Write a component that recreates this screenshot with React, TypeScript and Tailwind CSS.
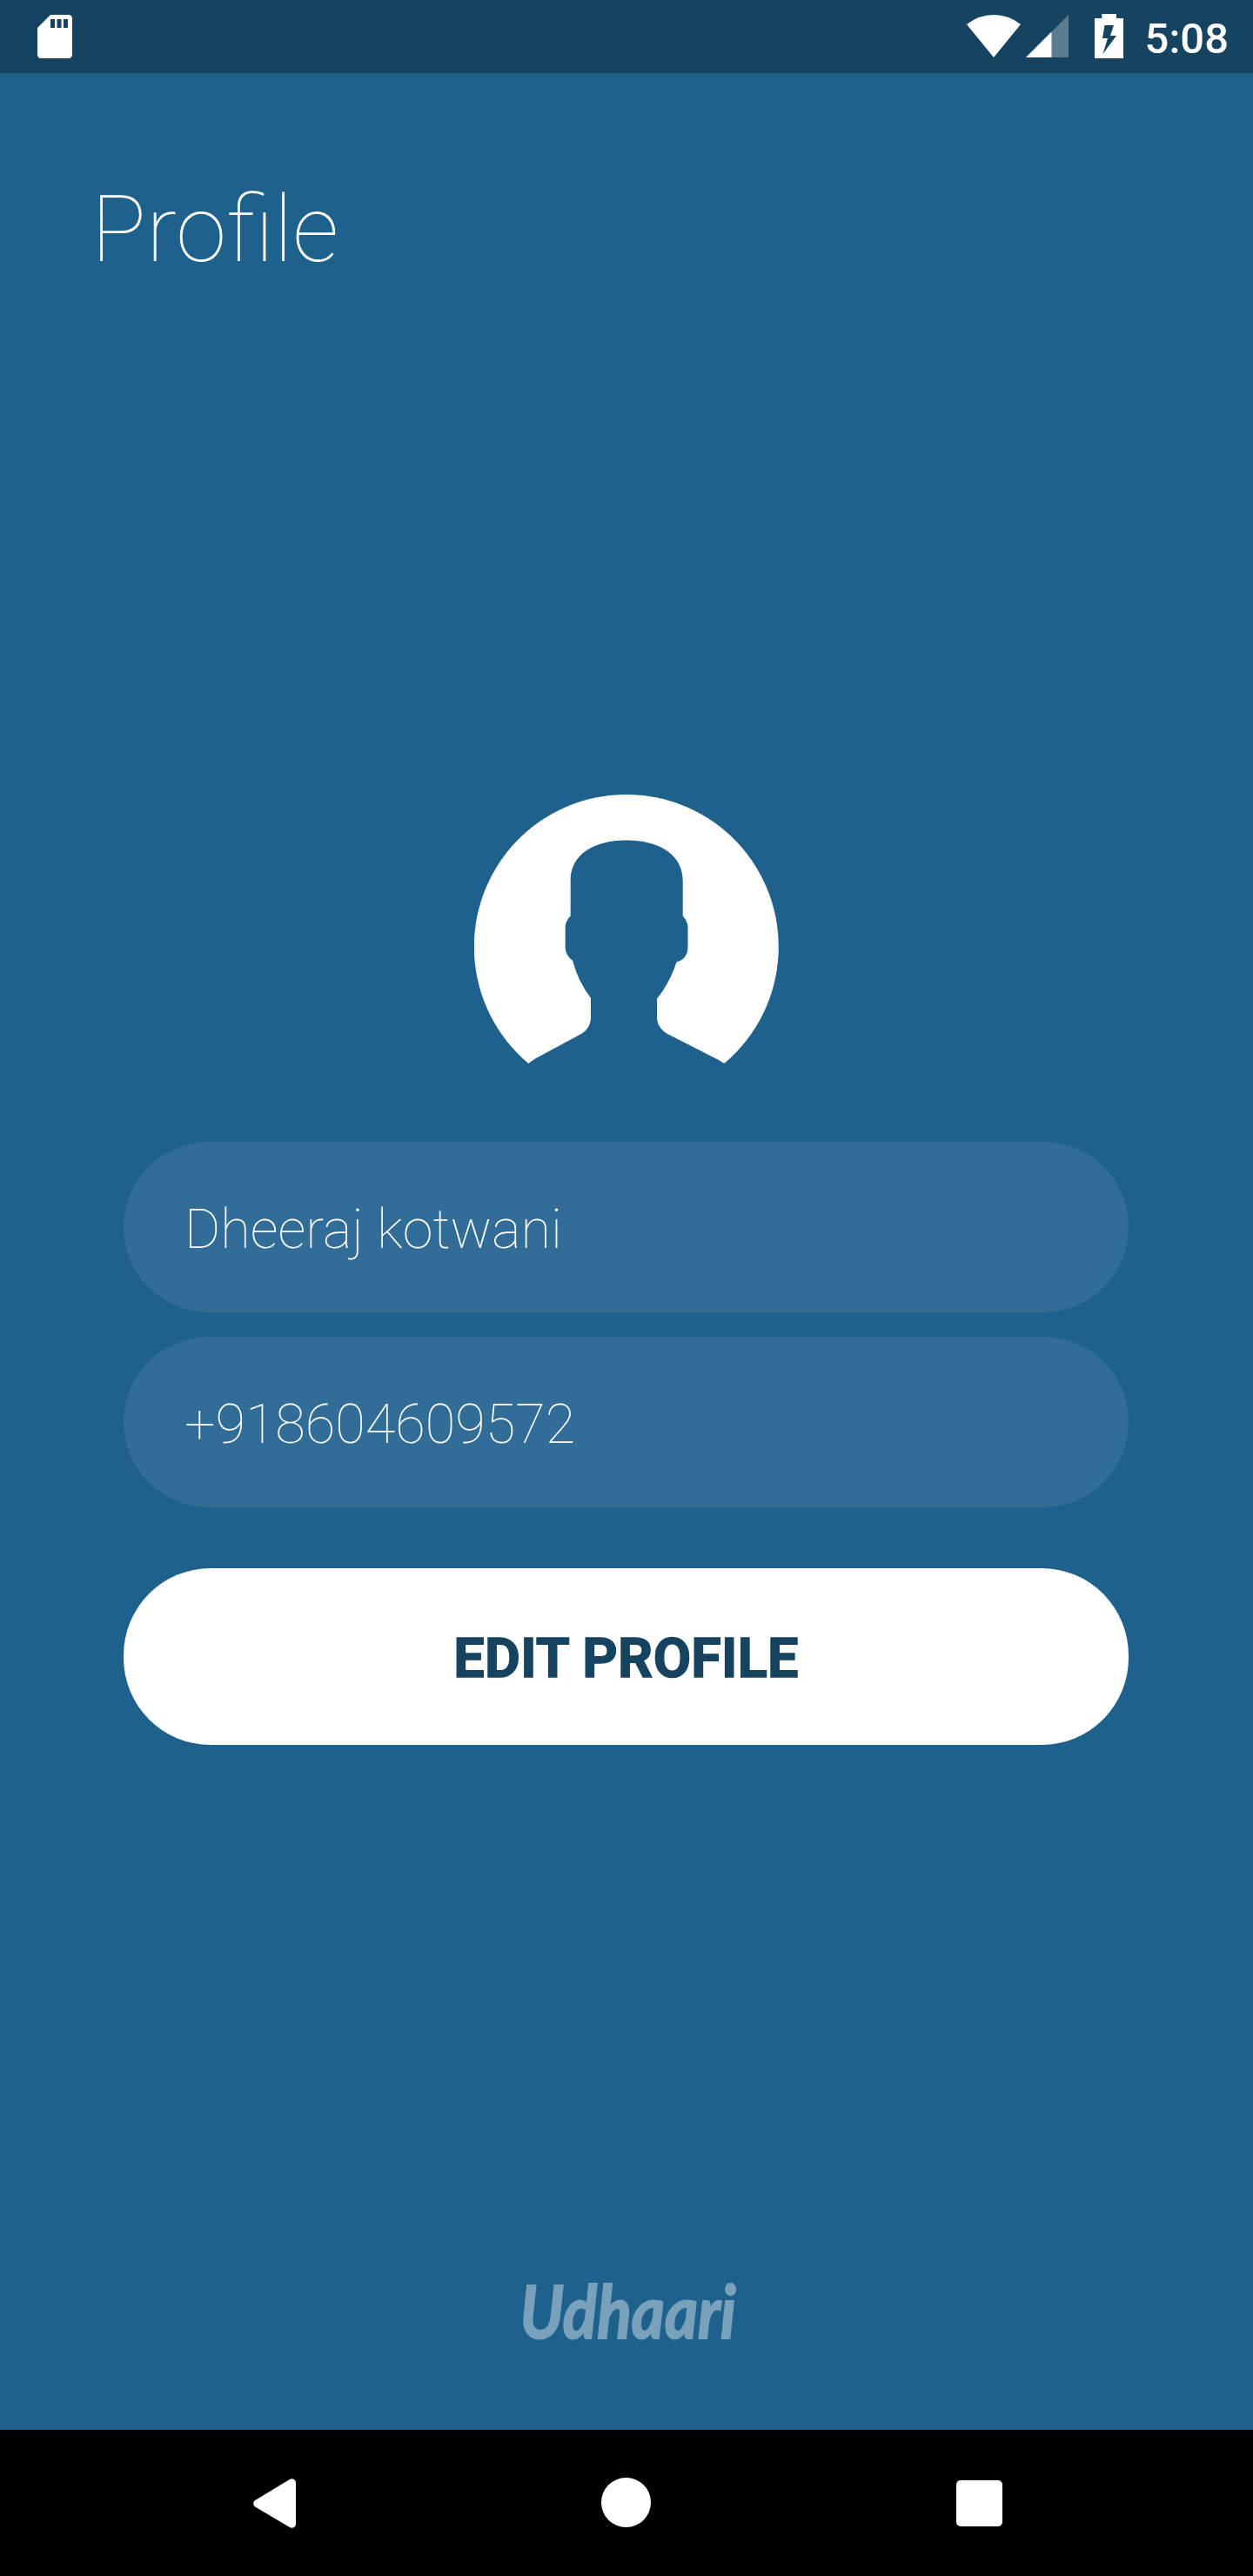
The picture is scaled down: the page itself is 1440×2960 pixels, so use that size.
import React from "react";

function StatusBar() {
  return (
    <header className="flex h-[84px] items-start justify-between bg-[#154360] text-white">
      <svg className="mt-[17px] ml-[43px] h-[50px] w-10" viewBox="0 0 40 50" fill="currentColor">
        <path
          fillRule="evenodd"
          d="M15 0H35.500Q40 0 40 4.500V45.500Q40 50 35.500 50H4.500Q0 50 0 45.500V15ZM15 5V15H20V5ZM22.500 5V15H27.500V5ZM30 5V15H35V5Z"
        />
      </svg>
      <div className="flex items-start">
        <svg className="mt-[17px] h-[49px] w-[62px]" viewBox="0 0 62 49" fill="currentColor">
          <path d="M0 11Q14 0 31 0T62 11L31 49Z" />
        </svg>
        <svg className="mt-[17px] ml-[6px] h-[49px] w-[49px]" viewBox="0 0 49 49" fill="currentColor">
          <path d="M0 49L49 0V49Z" opacity="0.3" />
          <path d="M0 49L29.500 19.500V49Z" />
        </svg>
        <svg className="mt-[16px] ml-[30px] h-[51px] w-[33px]" viewBox="0 0 33 51" fill="currentColor">
          <path
            fillRule="evenodd"
            d="M8.300 0H25V5H33V51H0V5H8.300ZM11.500 13L9 28H15L9.500 46L25 25H18L22 13Z"
          />
        </svg>
        <span className="mt-[17px] mr-[28px] ml-[25px] text-[49px] leading-[56px] font-medium">5:08</span>
      </div>
    </header>
  );
}

function Avatar() {
  return (
    <svg className="mx-auto h-[310px] w-[350px]" viewBox="0 0 350 310" fill="#fff">
      <path d="M62.300 309A175 175 0 1 1 287.300 309Q283 306 279 304L222 275Q210 268 210 256V234.500Q225 216 232.500 192.500Q245 189 245.500 176V152Q245 145 239.700 139.500V98C239 70 214 52.500 175 52.500S111 70 110.700 98V139.500Q105 145 104.700 152V176Q105 185 113 190.500Q119 214 134 234V258Q133 269 123 275L71 303Q66 306 62.300 309Z" />
    </svg>
  );
}

function Field({ value }: { value: string }) {
  return (
    <div className="flex h-[196px] items-center rounded-full bg-[#326d98] pr-[70px] pl-[70px] text-[63px] leading-[74px] font-thin">
      <span className="mt-[5px]">{value}</span>
    </div>
  );
}

function NavigationBar() {
  return (
    <nav className="flex h-[168px] items-start bg-black pt-[55px] text-white">
      <svg className="mt-px ml-[291px] h-[57px] w-[49px]" viewBox="0 0 49 57" fill="currentColor">
        <path d="M1.800 25.300L41.500 1.200Q44 -0.300 46.500 0.700Q49 1.800 49 5V52Q49 55.200 46.500 56.300Q44 57.300 41.500 55.800L1.800 32.200Q-1.600 28.700 1.800 25.300Z" />
      </svg>
      <div className="ml-[351px] size-[57px] rounded-full bg-white" />
      <div className="mt-[3px] ml-[351px] size-[53px] rounded-[5px] bg-white" />
    </nav>
  );
}

export default function App() {
  return (
    <div className="flex h-[2960px] w-[1440px] flex-col bg-[#1f618d] font-[Roboto,sans-serif] text-white">
      <StatusBar />
      <h1 className="mt-[119px] ml-[105px] text-[105px] leading-[123px] font-thin">Profile</h1>
      <main className="mt-[587px] mr-[143px] ml-[142px]">
        <Avatar />
        <div className="mt-[89px] flex flex-col gap-7">
          <Field value="Dheeraj kotwani" />
          <Field value="+918604609572" />
        </div>
        <button className="mt-[70px] flex h-[203px] w-full items-center justify-center rounded-[100px] bg-white text-[63px] leading-[74px] font-bold text-[#154360]">
          <span className="mt-[5px] tracking-[0.2px] [-webkit-text-stroke:1.4px_#154360]">EDIT PROFILE</span>
        </button>
      </main>
      <footer className="mt-auto mb-[92px] flex justify-center pl-1 font-[Lato,sans-serif] text-[84px] leading-[90px] font-bold text-[#7aa1bc] italic">
        <span className="origin-center scale-x-[0.87] [-webkit-text-stroke:2px_#7aa1bc] [stroke-linejoin:round]">Udhaari</span>
      </footer>
      <NavigationBar />
    </div>
  );
}
